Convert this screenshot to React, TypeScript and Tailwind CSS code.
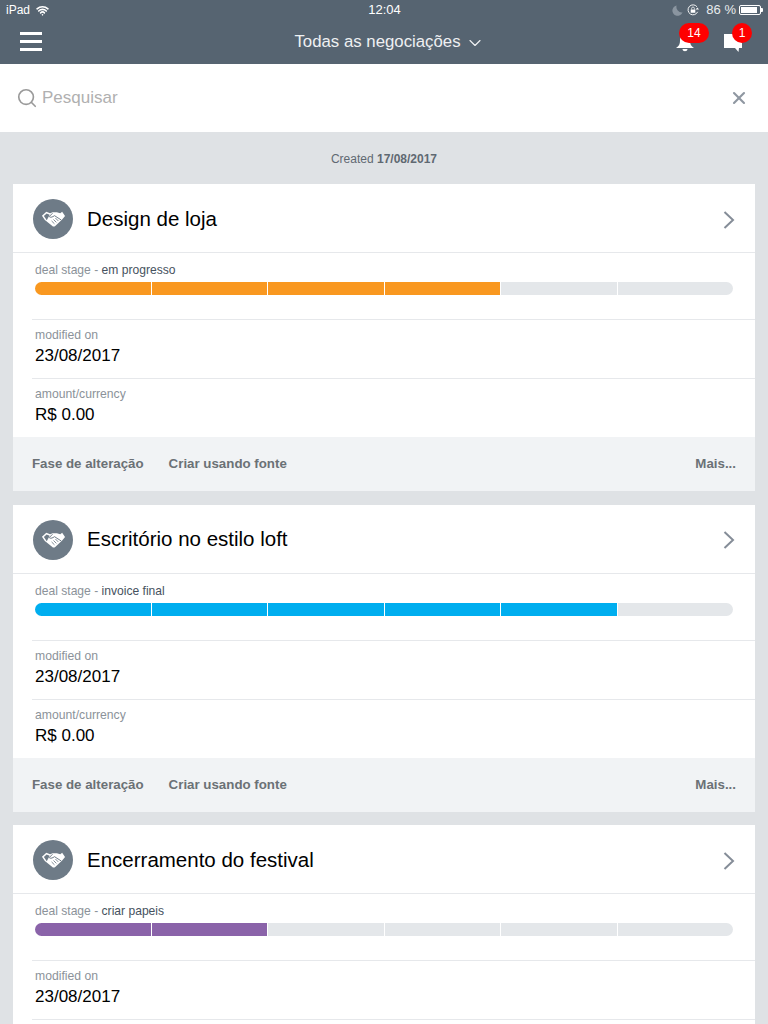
import { Search, X, ChevronDown, Wifi } from "lucide-react";

const font = "font-['Liberation_Sans',Arial,sans-serif]";

const deals = [
  { title: "Design de loja", stage: "em progresso", color: "bg-[#f99820]", filled: 4 },
  { title: "Escritório no estilo loft", stage: "invoice final", color: "bg-[#00aeef]", filled: 5 },
  { title: "Encerramento do festival", stage: "criar papeis", color: "bg-[#8a63a9]", filled: 2 },
];

function Handshake() {
  return (
    <svg viewBox="0 0 26 18" className="h-[18px] w-[25px]" fill="none">
      <path d="M1 5.5 L5.5 1.5 L9.5 3 L12 2 L16.5 2 L20 3 L22 1.5 L25 6 L22 9.5 L14.5 16.5 Q13 17.5 11.5 16 L4 10 Z" fill="#fff" />
      <path d="M3 5.8 L5.8 3.4 L9 4.6 L6 10.2 Z" fill="#6e7b87" />
      <path d="M12 3 L8.5 6.5 Q10 8 12.5 6.5 L14 5.5 L21 10" stroke="#6e7b87" strokeWidth="1" />
      <path d="M11 11 L14 14 M13 9.5 L16 12.5 M15 8 L18 11" stroke="#6e7b87" strokeWidth="0.9" />
    </svg>
  );
}

function StageBar({ color, filled }: { color: string; filled: number }) {
  return (
    <div className="mt-[5px] flex h-[13px] gap-px overflow-hidden rounded-full">
      {[0, 1, 2, 3, 4, 5].map((i) => (
        <div key={i} className={`flex-1 ${i < filled ? color : "bg-[#e4e7ea]"}`} />
      ))}
    </div>
  );
}

function Field({ label, value }: { label: string; value: string }) {
  return (
    <div className="ml-[19px] h-[59px] border-t border-[#e6e8eb] pl-[3px] pt-[8px]">
      <div className="text-[12.2px] leading-[14px] text-[#8b9299]">{label}</div>
      <div className="mt-[4px] text-[17px] leading-[20px] text-black">{value}</div>
    </div>
  );
}

function DealCard({ deal }: { deal: (typeof deals)[number] }) {
  return (
    <div className="bg-white">
      <div className="flex h-[68px] items-center pl-[20px] pr-[20px] pt-[2px]">
        <div className="flex h-[40px] w-[40px] items-center justify-center rounded-full bg-[#6e7b87]">
          <Handshake />
        </div>
        <div className="ml-[14px] flex-1 text-[20.5px] text-black">{deal.title}</div>
        <svg viewBox="0 0 12 18" className="mt-[1px] h-[18px] w-[12px]" fill="none">
          <path d="M1.5 1 L10 9 L1.5 17" stroke="#858d98" strokeWidth="2" />
        </svg>
      </div>
      <div className="h-[67px] border-t border-[#e6e8eb] px-[22px] pt-[10px]">
        <div className="text-[12.1px] leading-[14px] text-[#8b9299]">
          deal stage - <span className="text-[#46525e]">{deal.stage}</span>
        </div>
        <StageBar color={deal.color} filled={deal.filled} />
      </div>
      <Field label="modified on" value="23/08/2017" />
      <Field label="amount/currency" value="R$ 0.00" />
      <div className="flex h-[54px] items-center bg-[#f1f3f5] pl-[19px] pr-[19px] text-[13.3px] font-bold text-[#6b7176]">
        <span>Fase de alteração</span>
        <span className="ml-[25px]">Criar usando fonte</span>
        <span className="ml-auto">Mais...</span>
      </div>
    </div>
  );
}

export default function App() {
  return (
    <div className={`${font} h-[1024px] overflow-hidden bg-[#dfe2e5]`}>
      <div className="h-[64px] bg-[#566471] text-white">
        <div className="flex h-[20px] items-center justify-between pl-[6px] pr-[5px] text-[12px]">
          <div className="flex w-[200px] items-center gap-[6px]">
            iPad <Wifi className="h-[13px] w-[13px]" strokeWidth={3} />
          </div>
          <div className="text-[13px]">12:04</div>
          <div className="flex w-[200px] items-center justify-end text-[#e8ebed]">
            <svg viewBox="0 0 12 12" className="h-[11px] w-[11px]" fill="#8a95a0">
              <path d="M5 0.5 A5.7 5.7 0 1 0 11.5 8 A6 6 0 0 1 5 0.5 Z" />
            </svg>
            <svg viewBox="0 0 13 13" className="ml-[4px] h-[12px] w-[12px]" fill="none">
              <path d="M10.8 3 A5.4 5.4 0 1 0 11.5 8.5" stroke="#fff" strokeWidth="1" />
              <path d="M9.5 6 L13 6 L11.2 3.8 Z" fill="#fff" />
              <rect x="4" y="6" width="5" height="3.5" fill="#fff" />
              <path d="M5 6 V4.8 A1.5 1.5 0 0 1 8 4.8 V6" stroke="#fff" strokeWidth="0.8" />
            </svg>
            <span className="ml-[7px] text-[13px]">86 %</span>
            <div className="ml-[3px] flex h-[10px] w-[22px] items-center rounded-[2px] border border-white p-px">
              <div className="h-full w-[90%] bg-white" />
            </div>
            <div className="h-[4px] w-[2px] rounded-r-[1px] bg-white" />
          </div>
        </div>
        <div className="flex h-[44px] items-center pl-[20px] pr-[23px]">
          <div className="flex w-[22px] flex-col gap-[5px] pb-[1px]">
            <div className="h-[3px] bg-white" />
            <div className="h-[3px] bg-white" />
            <div className="h-[3px] bg-white" />
          </div>
          <div className="flex flex-1 items-center justify-center pb-[1px] pl-[62px] text-[16.8px] text-[#eef0f2]">
            Todas as negociações
            <ChevronDown className="ml-[4px] mt-[2px] h-[20px] w-[20px]" strokeWidth={1.4} />
          </div>
          <div className="flex items-center gap-[26px]">
            <div className="relative h-[22px] w-[22px]">
              <svg viewBox="0 0 20 20" className="absolute left-[0px] top-[2px] h-[20px] w-[20px]" fill="#fff">
                <path d="M10 1 C14 1 15 5 15 8 C15 11 16 13 19 15 L1 15 C4 13 5 11 5 8 C5 5 6 1 10 1 Z M7.5 16 L12.5 16 C12.5 19 7.5 19 7.5 16 Z" />
              </svg>
              <div className="absolute left-[4px] top-[-8px] flex h-[20px] w-[30px] items-center justify-center rounded-full bg-[#fe0000] text-[12px] text-white">
                14
              </div>
            </div>
            <div className="relative h-[22px] w-[22px]">
              <svg viewBox="0 0 20 20" className="absolute left-0 top-[2px] h-[20px] w-[20px]" fill="#fff">
                <path d="M1 1 L19 1 L19 15 L16 15 L15.5 19 L12 15 L1 15 Z" />
              </svg>
              <div className="absolute left-[9px] top-[-8px] flex h-[20px] w-[20px] items-center justify-center rounded-full bg-[#fe0000] text-[12px] text-white">
                1
              </div>
            </div>
          </div>
        </div>
      </div>
      <div className="flex h-[68px] items-center bg-white pl-[16px] pr-[19px]">
        <Search className="h-[22px] w-[22px] text-[#9a9a9a]" strokeWidth={1.8} />
        <span className="ml-[4px] flex-1 text-[17px] text-[#b0b0b0]">Pesquisar</span>
        <X className="h-[20px] w-[20px] text-[#8f97a1]" strokeWidth={2.5} />
      </div>
      <div className="flex h-[52px] items-center justify-center pt-[2px] text-[12px] text-[#5f6972]">
        Created&nbsp;<span className="font-bold">17/08/2017</span>
      </div>
      <div className="flex flex-col gap-[13.5px] px-[13px]">
        {deals.map((deal) => (
          <DealCard key={deal.title} deal={deal} />
        ))}
      </div>
    </div>
  );
}
